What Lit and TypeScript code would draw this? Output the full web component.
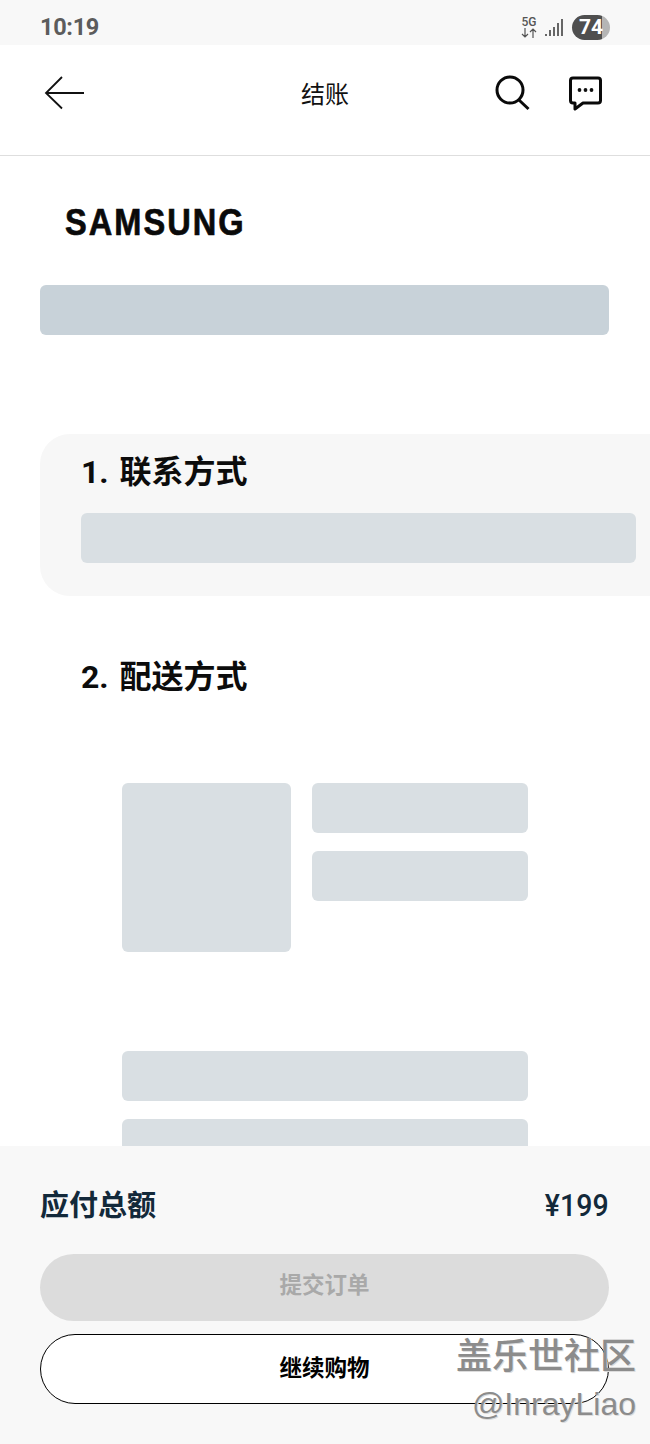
import { LitElement, html, css } from "lit";
import { customElement } from "lit/decorators.js";

@customElement("app-root")
export class AppRoot extends LitElement {
  static styles = css`
    :host { display: block; width: 650px; height: 1444px; position: relative; overflow: hidden; background: #fff; font-family: "Noto Sans CJK SC", "Liberation Sans", sans-serif; }
    .page { height: 1444px; display: flex; flex-direction: column; }
    .status { height: 45px; flex: none; background: #f8f8f8; display: flex; align-items: center; justify-content: space-between; padding: 10px 40px 0; box-sizing: border-box; }
    .time { font: 700 23.5px/1 "Roboto", sans-serif; color: #5c5c5c; letter-spacing: -0.3px; }
    .sys { display: flex; align-items: center; gap: 8px; }
    .net { display: flex; flex-direction: column; align-items: center; font: 500 12px/11px "Roboto", sans-serif; color: #555; width: 16px; }
    .batt { width: 38px; height: 25px; border-radius: 13px; background: linear-gradient(90deg, #4f4f4f 0 78%, #b5b5b5 78%); color: #fff; font: 700 21px/25px "Roboto", sans-serif; text-align: center; margin-left: 1px; }
    .nav { height: 111px; flex: none; box-sizing: border-box; border-bottom: 1px solid #dedede; display: grid; grid-template-columns: 1fr auto 1fr; align-items: start; padding: 30px 47px 0; }
    .nav .title { font-size: 24px; line-height: 36px; color: #111; font-weight: 400; }
    .nav .left { display: flex; margin-left: -3px; }
    .nav .right { display: flex; justify-content: flex-end; gap: 36px; }
    svg { display: block; }
    main { flex: 1; min-height: 0; overflow: hidden; display: flex; flex-direction: column; }
    main > * { flex: none; }
    .logo { padding: 46px 0 0 65px; height: 42px; }
    .logo span { display: inline-block; font: 700 37px/42px "Liberation Sans", sans-serif; letter-spacing: 2.3px; color: #0a0a0a; -webkit-text-stroke: 0.7px #0a0a0a; transform: scaleX(0.88); transform-origin: 0 50%; }
    .bar { height: 50px; border-radius: 6px; background: #d9dfe3; flex: none; }
    .top { margin: 41px 41px 0 40px; background: #c8d2d9; }
    .card { margin: 99px 0 0 40px; height: 162px; box-sizing: border-box; padding: 15px 14px 0 41px; background: #f7f7f7; border-radius: 30px 0 0 30px; }
    h2 { margin: 0; font-size: 32px; line-height: 46px; font-weight: 700; color: #0c0c0c; word-spacing: 3px; font-family: "Roboto", "Noto Sans CJK SC", sans-serif; }
    .card .bar { margin-top: 18px; }
    .ship { padding: 58px 0 0 81px; }
    .blocks { margin: 83px 0 0 41px; width: 406px; display: flex; flex-direction: column; }
    .prod { display: flex; gap: 21px; height: 169px; }
    .thumb { width: 169px; height: 169px; border-radius: 6px; background: #d9dfe3; flex: none; }
    .lines { flex: 1; display: flex; flex-direction: column; gap: 18px; }
    .rows { margin-top: 99px; display: flex; flex-direction: column; gap: 18px; }
    footer { height: 298px; flex: none; box-sizing: border-box; background: #f8f8f8; padding: 34px 41px 0 40px; }
    .total { display: flex; justify-content: space-between; align-items: center; height: 46px; color: #13293a; font-size: 29px; font-weight: 700; }
    .total .amt { font: 500 32px/1 "Roboto", sans-serif; padding-top: 4px; transform: scaleX(0.89); transform-origin: 100% 50%; }
    .btn { display: flex; align-items: center; justify-content: center; box-sizing: border-box; font-size: 22.5px; font-weight: 700; border-radius: 35px; }
    .submit { margin-top: 28px; height: 67px; background: #dcdcdc; color: #a9a9a9; padding-bottom: 9px; }
    .cont { margin-top: 13px; height: 70px; background: #fff; color: #000; border: 1.5px solid #000; padding-bottom: 7px; }
    .mark { position: absolute; right: 14px; top: 1332px; text-align: right; color: #8c8c8c; text-shadow: 1px 1px 0 #dcdcdc; }
    .mark .a { font-size: 36px; line-height: 42px; font-weight: 500; }
    .mark .b { font: 400 32px/36px "Liberation Sans", sans-serif; margin-top: 12px; }
  `;

  render() {
    return html`
      <div class="page">
        <div class="status">
          <span class="time">10:19</span>
          <div class="sys">
            <div class="net">5G
              <svg width="16" height="10" viewBox="0 0 16 10" fill="none" stroke="#555" stroke-width="1.2"><path d="M4 0v9M1 6l3 3 3-3M12 10V1M9 4l3-3 3 3"/></svg>
            </div>
            <svg width="18" height="20" viewBox="0 0 18 20" fill="#666"><rect x="0" y="16" width="2" height="2"/><rect x="4" y="12" width="2" height="6"/><rect x="8" y="9" width="2" height="9"/><rect x="12" y="5" width="2" height="13"/><rect x="16" y="1" width="2" height="17"/></svg>
            <div class="batt">74</div>
          </div>
        </div>
        <div class="nav">
          <div class="left">
            <svg width="42" height="38" viewBox="0 0 42 38" fill="none" stroke="#111" stroke-width="1.8"><path d="M40 18H2M18 2 2 18l16 15.500"/></svg>
          </div>
          <div class="title">结账</div>
          <div class="right">
            <svg width="36" height="38" viewBox="0 0 36 38" fill="none" stroke="#0a0a0a" stroke-width="3"><circle cx="15" cy="15" r="13"/><path d="m24 25 9.500 9"/></svg>
            <svg width="36" height="38" viewBox="0 0 36 38" fill="none"><path d="M6 3h25a2.500 2.500 0 0 1 2.500 2.500v20a2.500 2.500 0 0 1-2.500 2.500H16l-8 6v-6H6a2.500 2.500 0 0 1-2.500-2.500v-20A2.500 2.500 0 0 1 6 3z" stroke="#0a0a0a" stroke-width="3" stroke-linejoin="round"/><circle cx="12.500" cy="15" r="1.900" fill="#111"/><circle cx="18.500" cy="15" r="1.900" fill="#111"/><circle cx="24.500" cy="15" r="1.900" fill="#111"/></svg>
          </div>
        </div>
        <main>
          <div class="logo"><span>SAMSUNG</span></div>
          <div class="bar top"></div>
          <section class="card">
            <h2>1. 联系方式</h2>
            <div class="bar"></div>
          </section>
          <section class="ship">
            <h2>2. 配送方式</h2>
            <div class="blocks">
              <div class="prod">
                <div class="thumb"></div>
                <div class="lines"><div class="bar"></div><div class="bar"></div></div>
              </div>
              <div class="rows"><div class="bar"></div><div class="bar"></div></div>
            </div>
          </section>
        </main>
        <footer>
          <div class="total"><span>应付总额</span><span class="amt">¥199</span></div>
          <div class="btn submit">提交订单</div>
          <div class="btn cont">继续购物</div>
        </footer>
      </div>
      <div class="mark"><div class="a">盖乐世社区</div><div class="b">@InrayLiao</div></div>
    `;
  }
}
